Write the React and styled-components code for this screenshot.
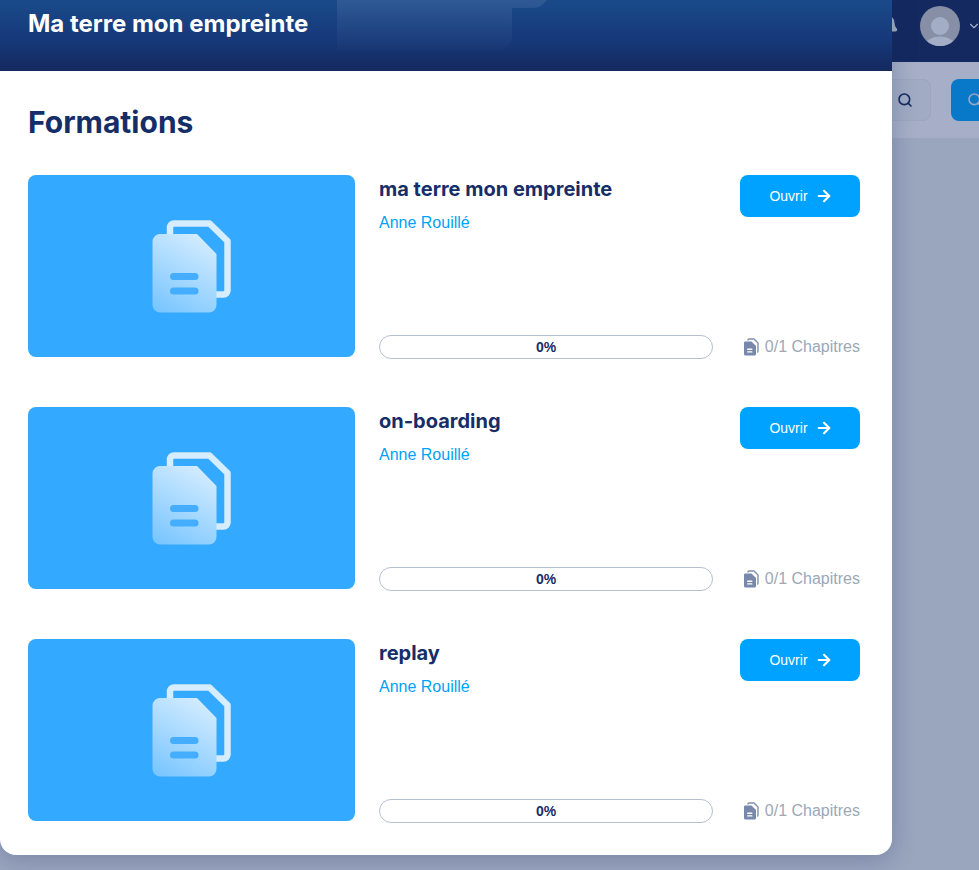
import styled, { createGlobalStyle } from 'styled-components'
import { ArrowRight, Search, Bell, ChevronDown } from 'lucide-react'

const GlobalStyle = createGlobalStyle`
  html, body {
    margin: 0;
    padding: 0;
    background: #9aa5be;
    font-family: 'Liberation Sans', Arial, sans-serif;
  }
`

const courses = [
  { id: 1, title: 'ma terre mon empreinte' },
  { id: 2, title: 'on-boarding' },
  { id: 3, title: 'replay' }
]

const DocsIcon = ({ id }) => (
  <svg width='120' height='120' viewBox='0 0 120 120' fill='none'>
    <defs>
      <linearGradient id={`front-${id}`} x1='75' y1='30' x2='30' y2='108' gradientUnits='userSpaceOnUse'>
        <stop offset='0' stopColor='#d6edff' />
        <stop offset='1' stopColor='#78c5ff' />
      </linearGradient>
    </defs>
    <path
      d='M40 29V22.5a4 4 0 0 1 4-4H79.5L97.5 36V85.5a4 4 0 0 1-4 4H86'
      stroke='#d6ecff'
      strokeWidth='6.5'
      strokeLinejoin='round'
    />
    <path
      d='M30 29H67L86.5 49V100a7.5 7.5 0 0 1-7.5 7.5H30a7.5 7.5 0 0 1-7.5-7.5V36.5a7.5 7.5 0 0 1 7.5-7.5Z'
      fill={`url(#front-${id})`}
    />
    <rect x='40' y='68' width='28.5' height='7' rx='3.5' fill='#45adff' />
    <rect x='40' y='82.5' width='28.5' height='7' rx='3.5' fill='#45adff' />
  </svg>
)

const SmallDocs = () => (
  <svg width='16' height='18' viewBox='0 0 16 18' fill='none'>
    <path d='M5 2.5V2a1 1 0 0 1 1-1h5l4 4v8a1 1 0 0 1-1 1' stroke='#7f8fb0' strokeWidth='1.4' />
    <path d='M2 3.5h6.5L13 8v8a1.5 1.5 0 0 1-1.5 1.5h-9A1.5 1.5 0 0 1 1 16V5a1.5 1.5 0 0 1 1-1.5Z' fill='#7788ab' />
    <rect x='4' y='10.5' width='5.5' height='1.4' rx='.7' fill='#fff' />
    <rect x='4' y='13.2' width='5.5' height='1.4' rx='.7' fill='#fff' />
  </svg>
)

const HeaderWatermark = () => (
  <WatermarkSvg width='212' height='56' viewBox='0 0 212 56' fill='none'>
    <defs>
      <linearGradient id='watermark' x1='0' y1='0' x2='0' y2='50' gradientUnits='userSpaceOnUse'>
        <stop offset='0' stopColor='#fff' stopOpacity='.09' />
        <stop offset='1' stopColor='#fff' stopOpacity='.01' />
      </linearGradient>
    </defs>
    <path
      d='M0 0H210C206 5 202 8 196 8H175V36C175 44 169 50 161 50H0Z'
      fill='url(#watermark)'
    />
  </WatermarkSvg>
)

const App = () => {
  return (
    <>
      <GlobalStyle />
      <Page>
        <TopBar>
          <BellIcon size={22} fill='#a3aec6' stroke='#a3aec6' />
          <Avatar>
            <svg width='40' height='40' viewBox='0 0 40 40'>
              <circle cx='20' cy='20' r='9' fill='#a3aec6' />
              <ellipse cx='20' cy='42' rx='16' ry='11.5' fill='#a3aec6' />
            </svg>
          </Avatar>
          <Chevron size={14} color='#a3aec6' />
        </TopBar>
        <SubBar>
          <SearchGhost>
            <Search size={16} strokeWidth={2.4} color='#14295f' />
          </SearchGhost>
          <SearchBlue>
            <Search size={16} strokeWidth={2.4} color='#9aa5be' />
          </SearchBlue>
        </SubBar>
      </Page>
      <Panel>
        <Header>
          <HeaderWatermark />
          <HeaderTitle>Ma terre mon empreinte</HeaderTitle>
        </Header>
        <Body>
          <Heading>Formations</Heading>
          <List>
            {courses.map((course) => (
              <Row key={course.id}>
                <Thumb>
                  <DocsIcon id={course.id} />
                </Thumb>
                <Info>
                  <TitleLine>
                    <div>
                      <CourseTitle>{course.title}</CourseTitle>
                      <Author>Anne Rouillé</Author>
                    </div>
                    <OpenButton>
                      Ouvrir
                      <ArrowRight size={18} strokeWidth={2.8} />
                    </OpenButton>
                  </TitleLine>
                  <ProgressLine>
                    <Progress>0%</Progress>
                    <Chapters>
                      <SmallDocs />
                      0/1 Chapitres
                    </Chapters>
                  </ProgressLine>
                </Info>
              </Row>
            ))}
          </List>
        </Body>
      </Panel>
    </>
  )
}

const Page = styled.div`
  height: 870px;
  overflow: hidden;
`

const TopBar = styled.div`
  height: 62px;
  background: #14295f;
  display: flex;
  align-items: center;
  justify-content: flex-end;
  padding-bottom: 10px;
  box-sizing: border-box;
  gap: 7px;
`

const BellIcon = styled(Bell)`
  margin-right: 14px;
`

const Chevron = styled(ChevronDown)`
  flex-shrink: 0;
  margin-right: -2px;
`

const Avatar = styled.div`
  width: 40px;
  height: 40px;
  border-radius: 50%;
  overflow: hidden;
  background: #868fa5;
`

const SubBar = styled.div`
  height: 76px;
  background: #a6afc7;
  display: flex;
  justify-content: flex-end;
  align-items: center;
  gap: 20px;
  margin-right: -28px;
`

const SearchGhost = styled.div`
  width: 60px;
  height: 42px;
  border-radius: 8px;
  box-sizing: border-box;
  border: 1px solid #9ca6bf;
  background: #a1abc3;
  display: flex;
  align-items: center;
  justify-content: flex-end;
  padding-right: 17px;
`

const SearchBlue = styled.div`
  width: 56px;
  height: 42px;
  border-radius: 8px;
  background: #0878c8;
  display: flex;
  align-items: center;
  padding-left: 16px;
  box-sizing: border-box;
`

const Panel = styled.div`
  position: absolute;
  top: 0;
  left: 0;
  width: 892px;
  height: 855px;
  background: #fff;
  border-radius: 0 0 16px 16px;
  box-shadow: 0 4px 24px rgba(20, 41, 95, 0.25);
  overflow: hidden;
`

const Header = styled.div`
  position: relative;
  height: 71px;
  background: linear-gradient(180deg, #1a4a8a 0%, #16397a 55%, #14295f 100%);
  padding: 9px 28px 0;
  box-sizing: border-box;
`

const WatermarkSvg = styled.svg`
  position: absolute;
  top: 0;
  left: 337px;
`

const HeaderTitle = styled.h1`
  position: relative;
  margin: 0;
  font-family: Inter, sans-serif;
  font-size: 24px;
  line-height: 29px;
  font-weight: 700;
  color: #fff;
`

const Body = styled.div`
  padding: 32px 32px 0 28px;
`

const Heading = styled.h2`
  margin: 0 0 34px;
  font-family: Inter, sans-serif;
  font-size: 30px;
  line-height: 38px;
  font-weight: 700;
  color: #162e68;
`

const List = styled.div`
  display: flex;
  flex-direction: column;
  gap: 48px;
`

const Row = styled.div`
  display: flex;
  align-items: flex-start;
  gap: 24px;
`

const Thumb = styled.div`
  width: 327px;
  height: 182px;
  background: #33a9ff;
  border-radius: 8px;
  display: flex;
  align-items: center;
  justify-content: center;
  padding: 0 3px 2px 0;
  box-sizing: border-box;
`

const Info = styled.div`
  flex: 1;
  height: 184px;
  display: flex;
  flex-direction: column;
  justify-content: space-between;
`

const TitleLine = styled.div`
  display: flex;
  justify-content: space-between;
  align-items: flex-start;
`

const CourseTitle = styled.div`
  font-family: Inter, sans-serif;
  font-size: 20px;
  line-height: 28px;
  font-weight: 700;
  color: #162e68;
`

const Author = styled.div`
  margin-top: 10px;
  font-size: 16px;
  line-height: 20px;
  color: #00a2f5;
`

const OpenButton = styled.button`
  width: 120px;
  height: 42px;
  border: 0;
  border-radius: 8px;
  background: #00a2ff;
  color: #fff;
  font-family: 'Liberation Sans', Arial, sans-serif;
  font-size: 14px;
  display: flex;
  align-items: center;
  justify-content: center;
  gap: 7px;
  padding: 0 0 0 2px;
`

const ProgressLine = styled.div`
  display: flex;
  align-items: center;
  justify-content: space-between;
`

const Progress = styled.div`
  width: 334px;
  height: 24px;
  border: 1px solid #b4bfd0;
  border-radius: 12px;
  box-sizing: border-box;
  display: flex;
  align-items: center;
  justify-content: center;
  font-size: 14px;
  font-weight: 700;
  color: #162e68;
`

const Chapters = styled.div`
  display: flex;
  align-items: center;
  gap: 6px;
  font-size: 16px;
  color: #9ba8b8;
`

export default App
